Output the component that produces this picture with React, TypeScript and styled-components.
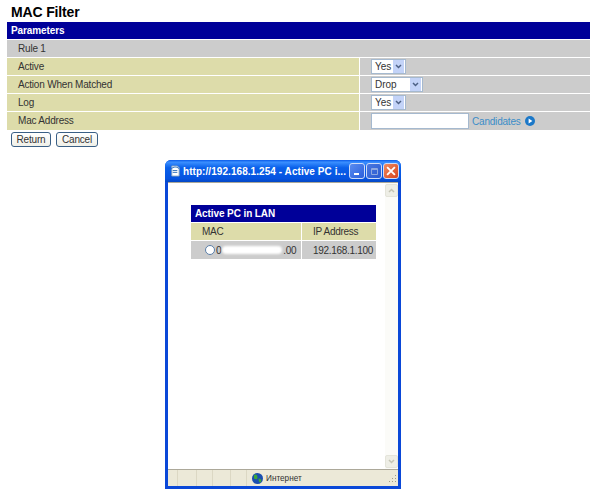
import { createGlobalStyle } from 'styled-components'
import styled from 'styled-components'

const Global = createGlobalStyle`
  html, body { margin: 0; padding: 0; background: #fff; }
  body { font-family: "Liberation Sans", Arial, sans-serif; width: 600px; height: 496px; overflow: hidden; }
`

const Page = styled.div`
  position: relative;
  width: 600px;
  height: 496px;
  padding: 4px 10px 0 7px;
  box-sizing: border-box;
`
const Title = styled.h1`
  margin: 0 0 0 4px;
  height: 18px;
  font-size: 14px;
  letter-spacing: -0.15px;
  line-height: 17px;
  font-weight: bold;
  color: #000;
`
const Table = styled.div`
  display: flex;
  flex-direction: column;
  gap: 1px;
`
const Head = styled.div`
  height: 17px;
  padding-left: 4px;
  background: #000099;
  color: #fff;
  font-size: 10px;
  letter-spacing: -0.1px;
  font-weight: bold;
  line-height: 17px;
`
const RuleRow = styled.div`
  height: 17px;
  padding-left: 11px;
  background: #cccccc;
  color: #333;
  font-size: 10px;
  letter-spacing: -0.2px;
  line-height: 17px;
`
const Row = styled.div<{ $h?: number }>`
  display: flex;
  height: ${(p) => p.$h ?? 17}px;
  gap: 1px;
`
const Label = styled.div`
  width: 352px;
  padding-left: 11px;
  box-sizing: border-box;
  background: #dddcaa;
  color: #333;
  font-size: 10px;
  letter-spacing: -0.2px;
  line-height: 18px;
`
const Value = styled.div`
  flex: 1;
  display: flex;
  align-items: center;
  padding-left: 11px;
  background: #cccccc;
`
const Select = styled.div<{ $w: number }>`
  display: flex;
  align-items: center;
  justify-content: space-between;
  width: ${(p) => p.$w}px;
  height: 15px;
  box-sizing: border-box;
  border: 1px solid #a5b9cf;
  background: #fff;
  padding: 0 1px 0 3px;
  font-size: 10px;
  color: #333;
`
const Arrow = styled.span`
  display: flex;
  align-items: center;
  justify-content: center;
  width: 11px;
  height: 13px;
  background: #c3d3f8;
`
const TextField = styled.div`
  width: 98px;
  height: 16px;
  box-sizing: border-box;
  border: 1px solid #a5b9cf;
  background: #fff;
`
const Candidates = styled.span`
  display: flex;
  align-items: center;
  gap: 4px;
  margin-left: 3px;
  font-size: 10px;
  letter-spacing: -0.2px;
  color: #3b8cc8;
`
const Actions = styled.div`
  display: flex;
  gap: 5px;
  margin: 2px 0 0 4px;
`
const Button = styled.div<{ $w: number }>`
  width: ${(p) => p.$w}px;
  height: 15px;
  box-sizing: border-box;
  border: 1px solid #3a5f85;
  border-radius: 3px;
  background: linear-gradient(#ffffff, #f0f0e8);
  font-size: 10px;
  letter-spacing: -0.2px;
  line-height: 13px;
  text-align: center;
  color: #333;
`
const Popup = styled.div`
  position: absolute;
  left: 165px;
  top: 160px;
  width: 236px;
  height: 329px;
  display: flex;
  flex-direction: column;
  box-sizing: border-box;
  padding: 0 3px 3px;
  background: #0a48d8;
  border-radius: 6px 6px 0 0;
`
const TitleBar = styled.div`
  display: flex;
  align-items: center;
  height: 22px;
  margin: 0 -3px;
  padding: 0 2px 0 4px;
  border-radius: 6px 6px 0 0;
  background: linear-gradient(#0a5ae8 0%, #3a8fff 10%, #0a60ea 35%, #0553e0 85%, #0447c4 100%);
`
const PopupTitle = styled.span`
  flex: 1;
  margin-left: 2px;
  font-size: 10px;
  font-weight: bold;
  letter-spacing: 0.06px;
  color: #fff;
  white-space: nowrap;
`
const WinButton = styled.span<{ $c: string }>`
  display: flex;
  align-items: center;
  justify-content: center;
  width: 16px;
  height: 16px;
  margin-left: 1px;
  box-sizing: border-box;
  border: 1px solid #cfdcf8;
  border-radius: 3px;
  background: ${(p) => p.$c};
`
const Client = styled.div`
  flex: 1;
  display: flex;
  background: #fff;
  border-top: 1px solid #aca899;
`
const Content = styled.div`
  flex: 1;
  padding: 22px 0 0 23px;
`
const Scrollbar = styled.div`
  width: 13px;
  display: flex;
  flex-direction: column;
  justify-content: space-between;
  background: #fbfbf8;
  padding: 1px 0;
`
const ScrollBtn = styled.span`
  display: flex;
  align-items: center;
  justify-content: center;
  height: 13px;
  background: #eeeee6;
  border: 1px solid #e4e4da;
  box-sizing: border-box;
  border-radius: 2px;
`
const InnerTable = styled.div`
  width: 185px;
  display: flex;
  flex-direction: column;
  gap: 1px;
`
const InnerHead = styled.div`
  height: 17px;
  padding-left: 4px;
  background: #000099;
  color: #fff;
  font-size: 10px;
  letter-spacing: -0.1px;
  font-weight: bold;
  line-height: 17px;
`
const InnerRow = styled.div<{ $h?: number }>`
  display: grid;
  grid-template-columns: 110px 1fr;
  column-gap: 1px;
  height: ${(p) => p.$h ?? 17}px;
`
const Cell = styled.div<{ $bg: string; $pad: number }>`
  display: flex;
  align-items: center;
  padding-left: ${(p) => p.$pad}px;
  background: ${(p) => p.$bg};
  font-size: 10px;
  letter-spacing: -0.3px;
  color: #333;
  overflow: hidden;
  white-space: nowrap;
`
const Radio = styled.span`
  width: 10px;
  height: 10px;
  box-sizing: border-box;
  border: 1px solid #5a7ea8;
  border-radius: 50%;
  background: #fff;
  flex: none;
  margin-right: 1px;
`
const Masked = styled.span`
  width: 60px;
  height: 8px;
  margin: 0 1px 0 1px;
  background: #fff;
  border-radius: 4px;
  filter: blur(1px);
  flex: none;
`
const StatusBar = styled.div`
  position: relative;
  display: flex;
  align-items: center;
  height: 16px;
  background: #ece9d8;
  border-top: 1px solid #aca899;
`
const StatusCell = styled.span<{ $w: number }>`
  width: ${(p) => p.$w}px;
  height: 100%;
  box-sizing: border-box;
  border-right: 1px solid #dcd8c4;
`
const Zone = styled.span`
  display: flex;
  align-items: center;
  gap: 3px;
  margin-left: 5px;
  font-size: 8.2px;
  color: #333;
`
const Grip = styled.svg`
  position: absolute;
  right: 1px;
  bottom: 1px;
`

const Chevron = () => (
  <svg width="7" height="5" viewBox="0 0 7 5">
    <path d="M1 1l2.5 2.5L6 1" fill="none" stroke="#4d6185" strokeWidth="1.5" />
  </svg>
)

const Choice = ({ w, text }: { w: number; text: string }) => (
  <Select $w={w}>
    {text}
    <Arrow>
      <Chevron />
    </Arrow>
  </Select>
)

export default function App() {
  return (
    <Page>
      <Global />
      <Title>MAC Filter</Title>
      <Table>
        <Head>Parameters</Head>
        <RuleRow>Rule 1</RuleRow>
        <Row>
          <Label>Active</Label>
          <Value>
            <Choice w={35} text="Yes" />
          </Value>
        </Row>
        <Row>
          <Label>Action When Matched</Label>
          <Value>
            <Choice w={52} text="Drop" />
          </Value>
        </Row>
        <Row>
          <Label>Log</Label>
          <Value>
            <Choice w={35} text="Yes" />
          </Value>
        </Row>
        <Row $h={18}>
          <Label>Mac Address</Label>
          <Value>
            <TextField />
            <Candidates>
              Candidates
              <svg width="10" height="10" viewBox="0 0 10 10">
                <circle cx="5" cy="5" r="5" fill="#1b78c8" />
                <path d="M3.6 2.4L7.4 5 3.6 7.6z" fill="#fff" />
              </svg>
            </Candidates>
          </Value>
        </Row>
      </Table>
      <Actions>
        <Button $w={40}>Return</Button>
        <Button $w={42}>Cancel</Button>
      </Actions>
      <Popup>
        <TitleBar>
          <svg width="12" height="12" viewBox="0 0 13 13">
            <path d="M3 1h6l2 2v9H3z" fill="#fff" stroke="#7d9cc0" />
            <path d="M1 6c2-4 7-5 10-2M4 6h5M4 8h5" fill="none" stroke="#2b6cb8" />
          </svg>
          <PopupTitle>http://192.168.1.254 - Active PC i...</PopupTitle>
          <WinButton $c="linear-gradient(135deg,#5a8cf0,#2a5fdc)">
            <svg width="9" height="9" viewBox="0 0 9 9">
              <rect x="1" y="6" width="5" height="2" fill="#fff" />
            </svg>
          </WinButton>
          <WinButton $c="linear-gradient(135deg,#4a78e0,#2a5ad0)">
            <svg width="9" height="9" viewBox="0 0 9 9">
              <path d="M1.5 1.5h6v6h-6z M1.5 2.5h6" fill="none" stroke="#8fa8e0" />
            </svg>
          </WinButton>
          <WinButton $c="linear-gradient(135deg,#ee8a60,#d8451e)">
            <svg width="10" height="10" viewBox="0 0 9 9">
              <path d="M1 1l7 7M8 1L1 8" stroke="#fff" strokeWidth="1.7" />
            </svg>
          </WinButton>
        </TitleBar>
        <Client>
          <Content>
            <InnerTable>
              <InnerHead>Active PC in LAN</InnerHead>
              <InnerRow>
                <Cell $bg="#dddcaa" $pad={11}>MAC</Cell>
                <Cell $bg="#dddcaa" $pad={11}>IP Address</Cell>
              </InnerRow>
              <InnerRow $h={18}>
                <Cell $bg="#cccccc" $pad={14}>
                  <Radio />
                  0
                  <Masked />
                  .00
                </Cell>
                <Cell $bg="#cccccc" $pad={11}>192.168.1.100</Cell>
              </InnerRow>
            </InnerTable>
          </Content>
          <Scrollbar>
            <ScrollBtn>
              <svg width="7" height="5" viewBox="0 0 7 5">
                <path d="M1 4l2.5-2.5L6 4" fill="none" stroke="#c4c4b4" strokeWidth="1.5" />
              </svg>
            </ScrollBtn>
            <ScrollBtn>
              <svg width="7" height="5" viewBox="0 0 7 5">
                <path d="M1 1l2.5 2.5L6 1" fill="none" stroke="#c4c4b4" strokeWidth="1.5" />
              </svg>
            </ScrollBtn>
          </Scrollbar>
        </Client>
        <StatusBar>
          <StatusCell $w={10} />
          <StatusCell $w={19} />
          <StatusCell $w={16} />
          <StatusCell $w={18} />
          <StatusCell $w={16} />
          <Zone>
            <svg width="11" height="11" viewBox="0 0 11 11">
              <circle cx="5.5" cy="5.5" r="5.5" fill="#1a4fb0" />
              <path d="M2 2c2-1 3.5 0 3.5 2.5s-2 2-3.5 1zM6.5 5.5c2 0 3.5 1 2.5 3.500-1 1-2.500 0-2.500-3.500z" fill="#3ea83a" />
            </svg>
            Интернет
          </Zone>
          <Grip width="11" height="11" viewBox="0 0 11 11">
            <path d="M9 1h1v1H9zM6 4h1v1H6zM9 4h1v1H9zM3 7h1v1H3zM6 7h1v1H6zM9 7h1v1H9z" fill="#a09c88" />
          </Grip>
        </StatusBar>
      </Popup>
    </Page>
  )
}
